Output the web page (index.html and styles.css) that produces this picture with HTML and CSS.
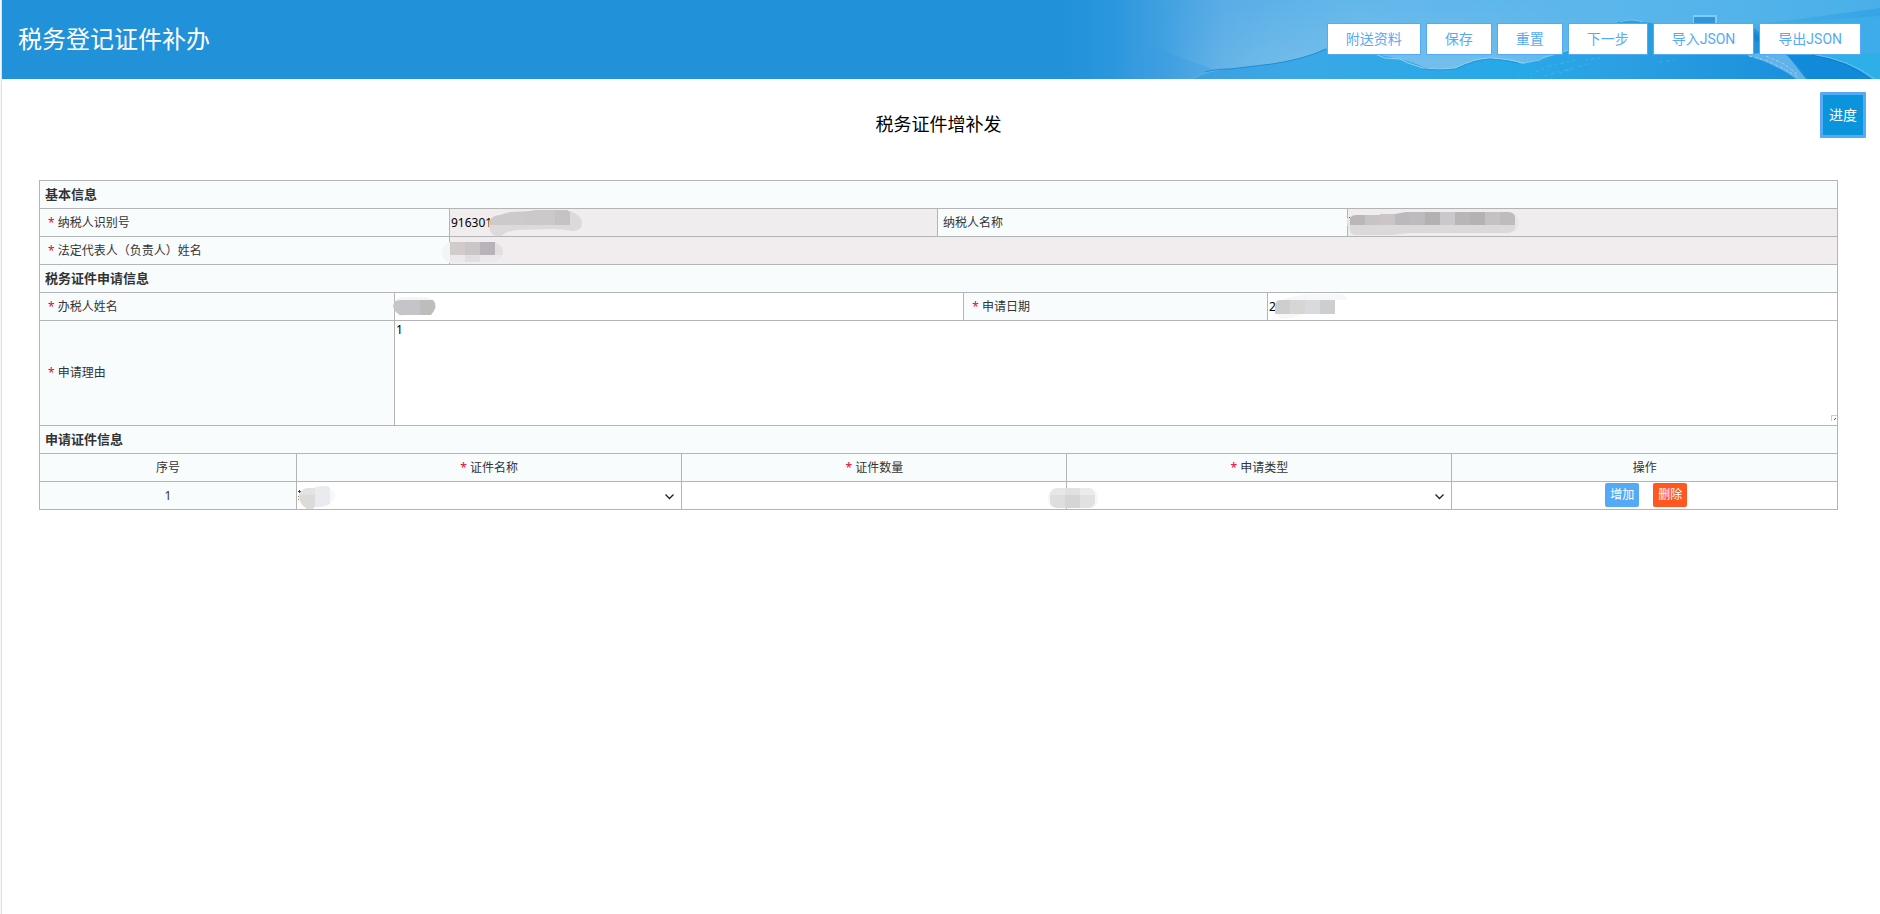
FILE: index.html
```html
<!DOCTYPE html>
<html lang="zh-CN">
<head>
<meta charset="utf-8">
<title>税务登记证件补办</title>
<link rel="stylesheet" href="styles.css">
</head>
<body>
<header class="header">
  <svg class="scenery" width="820" height="79" viewBox="0 0 820 79" aria-hidden="true">
    <defs>
      <linearGradient id="sky" x1="0" x2="1" y1="0" y2="0">
        <stop offset="0" stop-color="#2191da"/>
        <stop offset=".06" stop-color="#2a96dd"/>
        <stop offset=".2" stop-color="#5aade6"/>
        <stop offset=".36" stop-color="#63b8eb"/>
        <stop offset=".68" stop-color="#5ab6eb"/>
        <stop offset="1" stop-color="#4aafe9"/>
      </linearGradient>
      <linearGradient id="glow" x1="0" x2="0" y1="0" y2="1">
        <stop offset="0" stop-color="#8cc8ec" stop-opacity="0"/>
        <stop offset="1" stop-color="#8cc8ec" stop-opacity=".5"/>
      </linearGradient>
      <linearGradient id="fade" x1="0" x2="1" y1="0" y2="0">
        <stop offset="0" stop-color="#fff" stop-opacity="0"/>
        <stop offset=".25" stop-color="#fff"/>
        <stop offset=".75" stop-color="#fff"/>
        <stop offset="1" stop-color="#fff" stop-opacity="0"/>
      </linearGradient>
      <mask id="glowmask"><rect x="100" width="440" height="79" fill="url(#fade)"/></mask>
      <linearGradient id="hill" x1="0" x2="1" y1="0" y2="0">
        <stop offset="0" stop-color="#3d9ee1"/>
        <stop offset=".25" stop-color="#3ba8e6"/>
        <stop offset="1" stop-color="#20a8e8"/>
      </linearGradient>
      <linearGradient id="mount" x1="0" x2="1" y1="0" y2="0">
        <stop offset="0" stop-color="#27a9e8"/>
        <stop offset=".3" stop-color="#2b9fe2"/>
        <stop offset="1" stop-color="#1189da"/>
      </linearGradient>
      <linearGradient id="far" x1="0" x2="1" y1="0" y2="0">
        <stop offset="0" stop-color="#4bb0e9"/>
        <stop offset="1" stop-color="#30a2e4"/>
      </linearGradient>
    </defs>
    <rect width="820" height="79" fill="url(#sky)"/>
    <rect x="100" width="440" height="79" fill="url(#glow)" mask="url(#glowmask)"/>
    <path d="M95 48Q125 60 153 69L130 79H60Q70 55 95 48Z" fill="#389be0" opacity=".35"/>
    <path d="M650 28Q720 22 762 16L820 8V79H650Z" fill="url(#far)" opacity=".8"/>
    <path d="M133 79Q150 70 170 69L212 64Q245 59 266 49Q290 36 315 54L340 59Q355 63 363 67Q380 70 395 68Q415 58 430 58Q450 59 463 64L520 79Z" fill="url(#hill)"/>
    <path d="M145 72Q155 69 170 69L212 64Q245 59 266 49" fill="none" stroke="#1b8dd8"/>
    <path d="M315 54L325 58L340 59L348 63L363 68Q380 70 395 68Q415 58 430 58Q450 59 463 63" fill="none" stroke="#93d2f3"/>
    <path d="M363 69Q380 71 396 69Q415 60 430 59Q445 60 458 63" fill="none" stroke="#2191da" opacity=".7"/>
    <path d="M455 79Q458 68 463 64L485 58L507 51L540 32L560 21Q572 18 583 22L620 27H693L720 50L820 67V79Z" fill="url(#mount)"/>
    <path d="M463 63L480 60L484 57L497 54L508 50M560 22Q571 18 583 22" fill="none" stroke="#7cc8f1"/>
    <rect x="633" y="15" width="24" height="12" fill="#84cbf2"/>
    <rect x="634" y="17" width="21" height="10" fill="#2f97dd"/>
    <path d="M693 28L760 20L820 16V62L760 50Z" fill="#3eace8"/>
    <path d="M693 31L699 36V42L693 40Z" fill="#1784d4"/>
    <path d="M683 54L725 52L746 79H736Q716 64 683 54Z" fill="#5fb2ea"/>
    <path d="M724 53Q745 54 770 58Q795 68 810 79H748Q740 66 724 53Z" fill="#118ada"/>
    <path d="M744 54Q780 56 812 79H820V53Z" fill="#2eafe8"/>
    <path d="M746 54Q788 60 810 79" fill="none" stroke="#1678ce"/>
    <path d="M752 54Q790 60 815 79" fill="none" stroke="#64c4ef"/>
    <path d="M689 56L708 61L724 69L738 77M706 56L724 64L737 74" fill="none" stroke="#a3d3f3" stroke-dasharray="3 2 1 1 2 2"/>
    <path d="M470 74L490 66L515 60M485 76L512 68M500 73L530 63M525 60L540 58M600 62L616 60" fill="none" stroke="#60bff0" stroke-dasharray="2 4 4 3" opacity=".5"/>
  </svg>
  <h1 class="header-title">税务登记证件补办</h1>
  <nav class="actions">
    <button class="action" type="button">附送资料</button>
    <button class="action" type="button">保存</button>
    <button class="action" type="button">重置</button>
    <button class="action" type="button">下一步</button>
    <button class="action" type="button">导入JSON</button>
    <button class="action" type="button">导出JSON</button>
  </nav>
</header>
<button class="progress" type="button">进度</button>
<main class="main">
  <h2 class="form-title">税务证件增补发</h2>

  <table class="grid">
    <colgroup><col class="b1"><col class="b2"><col class="b1"><col></colgroup>
    <tr><th class="section" colspan="4">基本信息</th></tr>
    <tr>
      <td class="label"><label for="taxno"><span class="star">*</span> 纳税人识别号</label></td>
      <td class="readonly"><div class="field">
        <input id="taxno" class="input" value="916301" readonly>
        <svg class="mask" width="140" height="27" aria-hidden="true">
          <path d="M39 14Q60 1 120 2Q132 6 132 14Q132 22 122 22Q112 20 104 20L66 21Q55 23 53 26Q48 29 42 25Q38 20 39 14Z" fill="#dedadb"/>
          <path d="M39 16V12Q43 6 50 6L60 3L85 2V16Z" fill="#cccacb"/>
          <path d="M75 3L85 1H105V16H75Z" fill="#cdc9ca"/>
          <path d="M105 1H117L120 3V16H105Z" fill="#c5c3c4"/>
        </svg>
      </div></td>
      <td class="label"><label for="taxname">纳税人名称</label></td>
      <td class="readonly"><div class="field">
        <input id="taxname" class="input" readonly>
        <svg class="mask" width="180" height="27" aria-hidden="true">
          <path d="M-1 10Q0 8 2 8V22Q-1 18 -1 14ZM167 5Q171 8 171 13Q171 19 166 23Z" fill="#e8e6e7"/>
          <path d="M2 16H167V20Q165 24 159 24H60L45 26H8Q2 26 2 20Z" fill="#dcd9db"/>
          <path d="M2 16V9Q4 6 8 6H17V16Z" fill="#bbb6b8"/>
          <path d="M17 6H32V16H17Z" fill="#c6c4c7"/><path d="M32 5H47V16H32Z" fill="#ccc5c8"/>
          <path d="M47 5L58 3H62V16H47Z" fill="#bbb9bb"/><path d="M62 3H77V16H62Z" fill="#bdbbbd"/>
          <path d="M77 3H92V16H77Z" fill="#b5b1b0"/><path d="M92 3H107V16H92Z" fill="#cac8cc"/>
          <path d="M107 3H122V16H107Z" fill="#b9b7b6"/><path d="M122 3H137V16H122Z" fill="#b6b1b3"/>
          <path d="M137 3H152V16H137Z" fill="#c4c2c5"/><path d="M152 3H161Q167 4 167 8V16H152Z" fill="#c0bcbc"/>
          <path d="M1 8h1v1h-1z" fill="#8a4a20"/>
        </svg>
      </div></td>
    </tr>
    <tr>
      <td class="label"><label for="legal"><span class="star">*</span> 法定代表人（负责人）姓名</label></td>
      <td class="readonly" colspan="3"><div class="field">
        <input id="legal" class="input" readonly>
        <svg class="mask" width="60" height="27" aria-hidden="true">
          <path d="M0 5Q-8 9 -8 15Q-8 23 0 26Z" fill="#f2f4f5"/>
          <path d="M45 5Q53 9 53 15Q53 21 45 24Z" fill="#e2dfe1"/>
          <path d="M0 5H15V18H0Z" fill="#d1ccca"/><path d="M15 5H30V18H15Z" fill="#c9c5c8"/><path d="M30 5H45V18H30Z" fill="#b7b3b8"/>
          <path d="M0 18H15V25H0ZM30 18H53L45 25H30Z" fill="#eae9eb"/><path d="M15 18H30V25H15Z" fill="#e0dfe1"/>
        </svg>
      </div></td>
    </tr>
  </table>

  <table class="grid">
    <colgroup><col class="a1"><col class="a2"><col class="a3"><col></colgroup>
    <tr><th class="section" colspan="4">税务证件申请信息</th></tr>
    <tr>
      <td class="label"><label for="agent"><span class="star">*</span> 办税人姓名</label></td>
      <td><div class="field">
        <input id="agent" class="input">
        <svg class="mask" width="50" height="27" aria-hidden="true">
          <path d="M0 7Q3 4 10 4H30Q38 5 39 9L0 10ZM2 22H8V23H2Z" fill="#f5f5f6"/>
          <path d="M-2 13Q-1 7 5 7V22Q-1 19 -2 13Z" fill="#c6c6c6"/>
          <path d="M5 7H25V22H5Z" fill="#c5c5c9"/>
          <path d="M25 7H38Q44 13 36 22H25Z" fill="#bdbdbb"/>
        </svg>
      </div></td>
      <td class="label"><label for="date"><span class="star">*</span> 申请日期</label></td>
      <td><div class="field">
        <input id="date" class="input" value="2">
        <svg class="mask" width="90" height="27" aria-hidden="true">
          <path d="M12 7Q30 1 48 1H72Q78 2 80 7ZM8 20H38Q24 26 12 26Z" fill="#f7f7f9"/>
          <path d="M7 21V12Q8 7 12 7H22V21Z" fill="#cdcfce"/><path d="M22 7H37V21H22Z" fill="#d6d6d4"/>
          <path d="M37 7H52V21H37Z" fill="#d9dadd"/><path d="M52 7H67V21H52Z" fill="#cdcfce"/>
        </svg>
      </div></td>
    </tr>
    <tr>
      <td class="label"><label for="reason"><span class="star">*</span> 申请理由</label></td>
      <td colspan="3"><div class="field">
        <textarea id="reason" class="textarea">1</textarea>
        <svg class="grip" width="6" height="6" aria-hidden="true"><path d="M.5 6V.5H6" fill="none" stroke="#ccc"/><path d="M3 4h1v1h-1zM4 3h1v1h-1z" fill="#555"/></svg>
      </div></td>
    </tr>
  </table>

  <table class="grid center">
    <colgroup><col class="c1"><col class="c2"><col class="c2"><col class="c2"><col></colgroup>
    <tr><th class="section" colspan="5">申请证件信息</th></tr>
    <tr>
      <th class="label">序号</th>
      <th class="label"><span class="star">*</span> 证件名称</th>
      <th class="label"><span class="star">*</span> 证件数量</th>
      <th class="label"><span class="star">*</span> 申请类型</th>
      <th class="label">操作</th>
    </tr>
    <tr>
      <td class="label">1</td>
      <td><div class="field">
        <select class="input" aria-label="证件名称"><option></option></select>
        <svg class="arrow" width="9" height="6" viewBox="0 0 9 6" aria-hidden="true"><path d="M.5 .5L4.5 4.5L8.5 .5" fill="none" stroke="#222" stroke-width="1.3"/></svg>
        <svg class="mask" width="50" height="27" aria-hidden="true">
          <path d="M33 6Q38 9 38 14Q37 19 33 22Z" fill="#f8f8f9"/>
          <path d="M2 14Q4 6 12 6H18V25Q16 28 10 27Q2 22 2 14Z" fill="#dcdbdb"/>
          <path d="M3 13Q5 6 12 6H18V13Z" fill="#e3e3e2"/>
          <path d="M18 5L25 4H31L33 6V22Q26 26 18 25Z" fill="#eaebee"/>
          <path d="M1 9h3v1h-3zM2 8h1v3h-1z" fill="#444"/><path d="M1 14h1v1h-1zM1 17h1v1h-1z" fill="#c98a4a"/>
        </svg>
      </div></td>
      <td><input class="input" aria-label="证件数量"></td>
      <td><div class="field">
        <select class="input" aria-label="申请类型"><option></option></select>
        <svg class="arrow" width="9" height="6" viewBox="0 0 9 6" aria-hidden="true"><path d="M.5 .5L4.5 4.5L8.5 .5" fill="none" stroke="#222" stroke-width="1.3"/></svg>
        <svg class="mask" width="50" height="27" aria-hidden="true">
          <rect x="-19" y="7" width="50" height="19" rx="8" fill="#f7f7f8"/>
          <path d="M-17 13Q-16 6 -10 6H-2V13Z" fill="#e6e7e7"/><path d="M-2 6H13V13H-2Z" fill="#e1e1e1"/><path d="M13 6H22Q28 7 28 13H13Z" fill="#eaebeb"/>
          <path d="M-17 13H-2V26H-10Q-17 25 -17 19Z" fill="#dedede"/><path d="M-2 13H13V26H-2Z" fill="#d5d5d5"/><path d="M13 13H28V19Q28 26 21 26H13Z" fill="#e1e1e2"/>
        </svg>
      </div></td>
      <td><div class="row-actions">
        <button class="mini" type="button">增加</button>
        <button class="mini danger" type="button">删除</button>
      </div></td>
    </tr>
  </table>
</main>
</body>
</html>
```
FILE: styles.css
```css
* { box-sizing: border-box; }

body {
  margin: 0;
  min-height: 100vh;
  padding-left: 1px;
  border-left: 1px solid #f7f7f7;
  box-shadow: inset 1px 0 #e2e2e2;
  background: #fff;
  color: #333;
  font: 12px/18px "Noto Sans", "Noto Sans CJK SC", sans-serif;
}

button, input, select, textarea { font: inherit; }

.header {
  position: relative;
  display: flex;
  align-items: center;
  justify-content: space-between;
  height: 79px;
  padding: 0 19px 1px 16px;
  background: #2191da;
  overflow: hidden;
}

.scenery {
  position: absolute;
  top: 0;
  right: 0;
}

.header-title {
  position: relative;
  margin: 0;
  color: #fff;
  font-size: 24px;
  font-weight: 400;
  line-height: 36px;
}

.actions {
  position: relative;
  display: flex;
  gap: 5px;
}

.action {
  height: 32px;
  padding: 0 18px;
  border: 1px solid #55aaf5;
  background: #fff;
  color: #55aaf5;
  font-family: Roboto, "Noto Sans CJK SC", sans-serif;
  font-size: 14px;
  line-height: 30px;
}

.progress {
  position: fixed;
  top: 92px;
  right: 14px;
  width: 46px;
  height: 46px;
  padding: 0;
  border: 3px solid #55aaf5;
  border-radius: 1px;
  background: #0994dc;
  color: #fff;
  font-size: 14px;
}

.main { padding: 32px 42px 0 37px; }

.form-title {
  margin: 0 0 43px;
  color: #000;
  font-size: 18px;
  font-weight: 400;
  line-height: 26px;
  text-align: center;
}

.grid {
  width: 100%;
  border-collapse: collapse;
  table-layout: fixed;
}

.grid + .grid { margin-top: -1px; }

.grid th, .grid td {
  height: 28px;
  padding: 0;
  border: 1px solid #b2b4b5;
}

.b1 { width: 22.8%; }
.b2 { width: 27.15%; }
.a1 { width: 19.75%; }
.a2 { width: 31.65%; }
.a3 { width: 16.9%; }
.c1 { width: 14.3%; }
.c2 { width: 21.42%; }

.grid .section {
  padding: 0 5px 2px;
  background: #f8fcfd;
  font-size: 13px;
  font-weight: 700;
  text-align: left;
}

.grid .label {
  padding: 0 5px;
  background: #f8fcfd;
  font-weight: 400;
}

.star {
  margin-left: 3px;
  color: #f00030;
}

.center .label { text-align: center; }
.center .star { margin-left: 0; }
.readonly { background: #f1eced; }
.field { position: relative; }

.input {
  display: block;
  width: 100%;
  height: 27px;
  padding: 0 1px;
  border: 0;
  border-radius: 0;
  background: transparent;
  color: #000;
  appearance: none;
}

.textarea {
  display: block;
  width: 100%;
  height: 104px;
  padding: 0 1px;
  border: 0;
  background: transparent;
  color: #000;
  resize: none;
}

.mask {
  position: absolute;
  top: 0;
  left: 0;
  overflow: visible;
  pointer-events: none;
}

.arrow {
  position: absolute;
  top: 12px;
  right: 7px;
  pointer-events: none;
}

.grip {
  position: absolute;
  right: 0;
  bottom: 4px;
}

.row-actions {
  display: flex;
  justify-content: center;
  gap: 14px;
  height: 27px;
  padding: 1px 0 2px 3px;
}

.mini {
  height: 24px;
  padding: 0 5px;
  border: 0;
  border-radius: 2px;
  background: #55aaf5;
  color: #fff;
  line-height: 24px;
}

.danger { background: #ff5722; }
```
